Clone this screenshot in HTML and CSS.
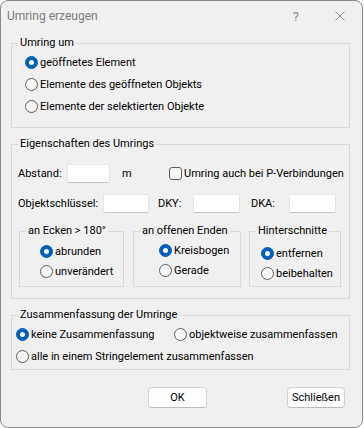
FILE: index.html
```html
<!DOCTYPE html>
<html>
<head>
  <meta charset="utf-8">
  <title>Umring erzeugen</title>
  <link rel="stylesheet" href="styles.css">
</head>
<body>
<div class="win">
  <div class="titlebar">
    <span class="title">Umring erzeugen</span>
    <span class="help">?</span>
    <svg class="close" width="10" height="10" viewBox="0 0 10 10"><path d="M0.5 0.5 L9.5 9.5 M9.5 0.5 L0.5 9.5" stroke="#8a8a8a" stroke-width="1" fill="none"/></svg>
  </div>

  <div class="content">
    <fieldset class="grp g1">
      <legend>Umring um</legend>
      <div class="inner">
        <label class="opt"><span class="radio on"></span>geöffnetes Element</label>
        <label class="opt"><span class="radio"></span>Elemente des geöffneten Objekts</label>
        <label class="opt"><span class="radio"></span>Elemente der selektierten Objekte</label>
      </div>
    </fieldset>

    <fieldset class="grp g2">
      <legend>Eigenschaften des Umrings</legend>
      <div class="inner">
        <div class="row r1">
          <span class="lbl w-abstand">Abstand:</span>
          <span class="field w43"></span>
          <span class="unit">m</span>
          <label class="chk"><span class="box"></span>Umring auch bei P-Verbindungen</label>
        </div>
        <div class="row r2">
          <span class="lbl w-key">Objektschlüssel:</span>
          <span class="field w46"></span>
          <span class="lbl w-dky">DKY:</span>
          <span class="field w47"></span>
          <span class="lbl w-dka">DKA:</span>
          <span class="field w47"></span>
        </div>
        <div class="subs">
          <fieldset class="sub ecken">
            <legend>an Ecken &gt; 180°</legend>
            <div class="inner">
              <label class="opt small"><span class="radio on"></span>abrunden</label>
              <label class="opt small"><span class="radio"></span>unverändert</label>
            </div>
          </fieldset>
          <fieldset class="sub enden">
            <legend>an offenen Enden</legend>
            <div class="inner">
              <label class="opt small"><span class="radio on"></span>Kreisbogen</label>
              <label class="opt small"><span class="radio"></span>Gerade</label>
            </div>
          </fieldset>
          <fieldset class="sub hinter">
            <legend>Hinterschnitte</legend>
            <div class="inner">
              <label class="opt small"><span class="radio on"></span>entfernen</label>
              <label class="opt small"><span class="radio"></span>beibehalten</label>
            </div>
          </fieldset>
        </div>
      </div>
    </fieldset>

    <fieldset class="grp g3">
      <legend>Zusammenfassung der Umringe</legend>
      <div class="inner">
        <div class="pair">
          <label class="opt first"><span class="radio on"></span>keine Zusammenfassung</label>
          <label class="opt"><span class="radio"></span>objektweise zusammenfassen</label>
        </div>
        <label class="opt"><span class="radio"></span>alle in einem Stringelement zusammenfassen</label>
      </div>
    </fieldset>

    <div class="buttons">
      <button class="btn ok">OK</button>
      <button class="btn close-btn">Schließen</button>
    </div>
  </div>
</div>
</body>
</html>
```

FILE: styles.css
```css
* { box-sizing: border-box; }

body {
    margin: 0;
    background: #fff;
    font-family: Roboto, "Noto Sans", sans-serif;
    font-size: 11px;
    color: #000;
    white-space: nowrap;
}

.win {
    width: 363px;
    height: 428px;
    background: #f0f0f0;
    border: 1px solid #8c8c8c;
    border-radius: 8px;
    display: flex;
    flex-direction: column;
}

.titlebar {
    height: 30px;
    display: flex;
    align-items: center;
    padding-left: 6px;
    color: #7b7b7b;
    font-size: 12px;
}
.titlebar .title { flex: 1; }
.titlebar .help { margin-right: 36px; font-size: 13px; color: #8a8a8a; }
.titlebar .close { margin-right: 17px; }

.content {
    padding: 5px 12px 0 10px;
}

/* group boxes: legend sits on the border, padding goes on .inner */
fieldset {
    margin: 0;
    padding: 0;
    border: 1px solid #d9d9d9;
    min-width: 0;
}
legend {
    margin-left: 6px;
    padding: 0 2px;
    line-height: 14px;
}

.grp { width: 339px; }

.g1 .inner { padding: 1px 0 10px 13px; }
.g2 { margin-top: 9px; }
.g2 > .inner { padding: 0 0 11px 6px; }
.g3 { margin-top: 9px; }
.g3 .inner { padding: 1px 0 2px 4px; }

.opt {
    display: flex;
    align-items: center;
    height: 22px;
}
.opt.small { height: 20px; }

.radio {
    width: 13px;
    height: 13px;
    border-radius: 50%;
    border: 1px solid #5c5c5c;
    background: #f7f7f7;
    margin-right: 2px;
    flex: none;
    position: relative;
}
.radio.on {
    background: #005fb8;
    border-color: #005fb8;
}
.radio.on::after {
    content: "";
    position: absolute;
    left: 3px;
    top: 3px;
    width: 5px;
    height: 5px;
    border-radius: 50%;
    background: #fff;
}

.row {
    display: flex;
    align-items: center;
    height: 19px;
}
.r1 { margin-top: 13px; }
.r2 { margin-top: 11px; }

.lbl { flex: none; }
.w-abstand { width: 49px; }
.w-key { width: 85px; }
.w-dky { width: 44px; padding-left: 9px; }
.w-dka { width: 49px; padding-left: 11px; }

.field {
    height: 19px;
    background: #fff;
    border: 1px solid #e4e4e4;
    border-bottom-color: #c4c4c4;
    border-radius: 2px;
    flex: none;
}
.w43 { width: 43px; }
.w46 { width: 46px; }
.w47 { width: 47px; }

.unit { width: 59px; padding-left: 12px; flex: none; }

.chk { display: flex; align-items: center; }
.chk .box {
    width: 13px;
    height: 13px;
    border: 1px solid #5c5c5c;
    border-radius: 3px;
    background: #f7f7f7;
    margin-right: 2px;
}

.subs {
    display: flex;
    margin-top: 11px;
    margin-left: 1px;
}
.ecken { width: 105px; }
.ecken .inner { padding: 3px 0 5px 20px; }
.enden { width: 108px; margin-left: 9px; }
.enden .inner { padding: 2px 0 5px 25px; }
.hinter { width: 92px; margin-left: 8px; }
.hinter .inner { padding: 5px 0 3px 11px; }

.pair { display: flex; }
.pair .first { width: 158px; }

.buttons {
    display: flex;
    justify-content: flex-end;
    margin-top: 17px;
    padding-right: 5px;
}
.btn {
    height: 21px;
    font: inherit;
    background: #fdfdfd;
    border: 1px solid #d3d3d3;
    border-bottom-color: #bcbcbc;
    border-radius: 4px;
    padding: 0;
    color: #000;
}
.ok { width: 59px; margin-right: 80px; }
.close-btn { width: 58px; }
```
